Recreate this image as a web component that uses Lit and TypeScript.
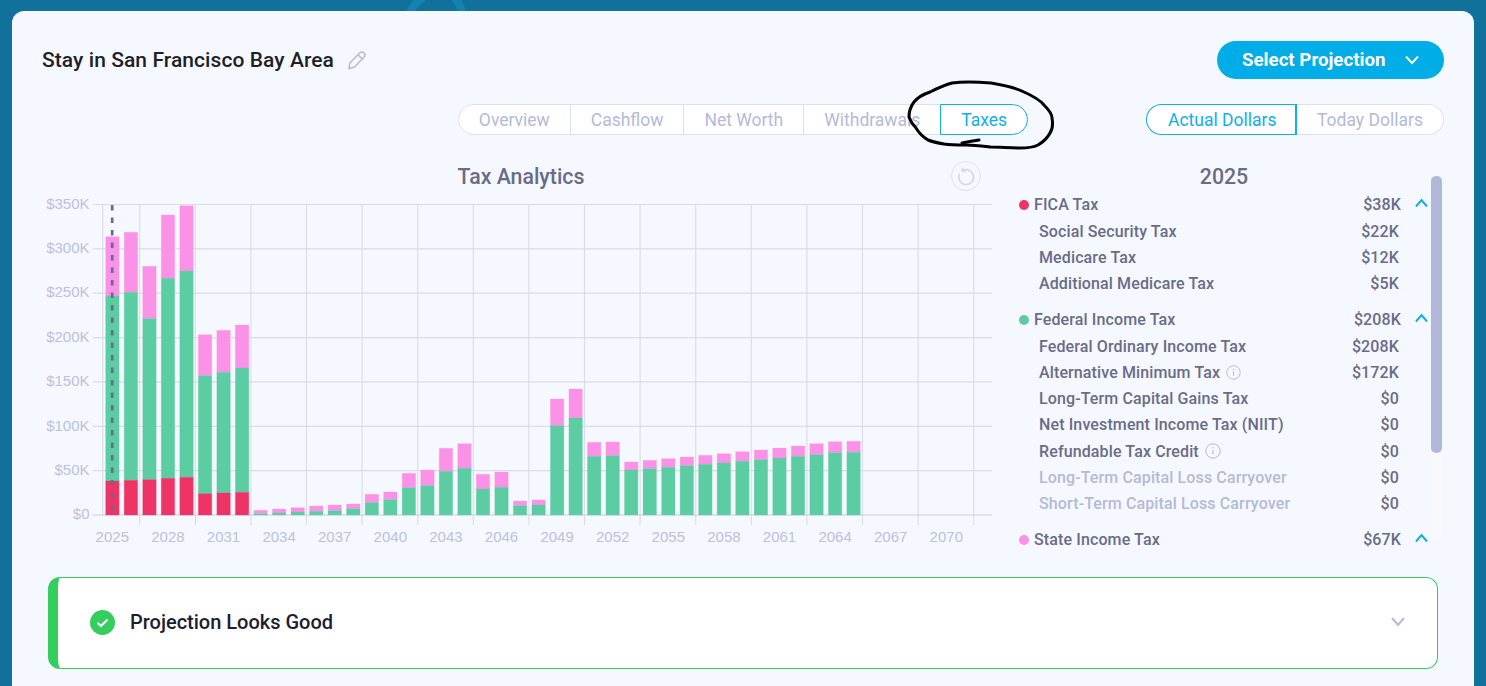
import { LitElement, html, css, svg } from "lit";
import { customElement } from "lit/decorators.js";

const BASE = 515;
// [pink top, green top, red top]
const BARS: number[][] = [
  [236.7, 296, 481], [232.3, 292.3, 480.3], [266.3, 318.7, 479.7], [215, 278.3, 478.3], [205.7, 271, 477.3],
  [334.7, 375.7, 493.7], [330.3, 372.3, 493], [325, 368, 492.3],
  [510.3, 513.7], [509, 513], [507.7, 512], [506, 511.3], [505, 510.7], [504, 508.7],
  [494.3, 502.7], [492, 499.7], [473.3, 487.7], [470, 485.7], [448.3, 471.3], [443.7, 468.3],
  [474.3, 489], [472, 487.3], [501, 505.7], [500, 505], [399, 425.7], [389, 418],
  [442.3, 456.3], [442, 455.7], [462, 470], [460.3, 468.7], [458.7, 467.3], [457, 465.7],
  [455.3, 464.3], [453.7, 463], [451.7, 461.3], [450, 459.7], [448, 458], [446, 456.3],
  [443.7, 454.7], [441.7, 452.7], [441.3, 452.3],
];
const STEP = 18.53;
const Y_LABELS = ["$350K", "$300K", "$250K", "$200K", "$150K", "$100K", "$50K", "$0"];

type Sub = { label: string; value: string; info?: number; dim?: boolean };
type Group = { label: string; value: string; color: string; subs: Sub[] };
const GROUPS: Group[] = [
  {
    label: "FICA Tax", value: "$38K", color: "#ee3466",
    subs: [
      { label: "Social Security Tax", value: "$22K" },
      { label: "Medicare Tax", value: "$12K" },
      { label: "Additional Medicare Tax", value: "$5K" },
    ],
  },
  {
    label: "Federal Income Tax", value: "$208K", color: "#5ccca3",
    subs: [
      { label: "Federal Ordinary Income Tax", value: "$208K" },
      { label: "Alternative Minimum Tax", value: "$172K", info: 15 },
      { label: "Long-Term Capital Gains Tax", value: "$0" },
      { label: "Net Investment Income Tax (NIIT)", value: "$0" },
      { label: "Refundable Tax Credit", value: "$0", info: 16 },
      { label: "Long-Term Capital Loss Carryover", value: "$0", dim: true },
      { label: "Short-Term Capital Loss Carryover", value: "$0", dim: true },
    ],
  },
  { label: "State Income Tax", value: "$67K", color: "#fc92e8", subs: [] },
];

@customElement("app-root")
export class AppRoot extends LitElement {
  static styles = css`
    :host {
      display: block;
      position: relative;
      width: 1486px;
      height: 686px;
      overflow: hidden;
      background: #10729a;
      font-family: Roboto, "Liberation Sans", sans-serif;
      box-sizing: border-box;
      padding: 11px 12px 0;
    }
    * { box-sizing: border-box; }
    .decor { position: absolute; left: 400px; top: 0; width: 70px; height: 11px; }
    .card {
      position: relative;
      background: #f6f8ff;
      border-radius: 12px 12px 0 0;
      height: 675px;
      padding: 30px 30px 0;
    }
    .head { display: flex; justify-content: space-between; align-items: center; height: 38px; }
    .title { display: flex; align-items: center; gap: 13px; font-size: 21px; font-weight: 500; letter-spacing: 0.07px; color: #1f1f27; }
    .select {
      width: 227px; height: 38px; border-radius: 19px; background: #00ade6; color: #fff;
      font-size: 18.7px; font-weight: 700; display: flex; align-items: center; padding: 0 0 1px 25px;
    }
    .select svg { margin-left: 20px; margin-top: 1px; }
    .controls { display: grid; grid-template-columns: 1fr auto 1fr; margin-top: 25px; height: 31px; }
    .tabs { grid-column: 2; display: flex; }
    .tab {
      height: 31px; padding: 0 20px; display: flex; align-items: center; background: #fff;
      font-size: 17.5px; color: #b4bad8; border: 1px solid #dde0f0; border-left: none; white-space: nowrap;
    }
    .tab.first { border-left: 1px solid #dde0f0; border-radius: 16px 0 0 16px; }
    .tab.sel { color: #0fb0e6; border: 1px solid #0fb0e6; border-radius: 0 16px 16px 0; margin-left: -1px; }
    .toggle { grid-column: 3; justify-self: end; display: flex; }
    .tg {
      height: 31px; display: flex; align-items: center; background: #fff; font-size: 17.5px; white-space: nowrap;
    }
    .tg.on {
      width: 151px; padding-left: 21px; color: #0fb0e6; border: 1px solid #0fb0e6; border-right-width: 2px;
      border-radius: 16px 0 0 16px;
    }
    .tg.off {
      width: 147px; padding-left: 20px; color: #b4bad8; border: 1px solid #dde0f0; border-left: none;
      border-radius: 0 16px 16px 0;
    }
    .main { display: flex; margin-top: 26px; height: 400px; }
    .chart { width: 976px; flex: none; }
    .chart-head { display: grid; grid-template-columns: 1fr auto 1fr; width: 958px; height: 30px; align-items: center; }
    .h2 { font-size: 21.3px; font-weight: 500; color: #696c88; grid-column: 2; }
    .reset {
      grid-column: 3; justify-self: end; margin-right: 19px; width: 30px; height: 30px; border-radius: 50%;
      border: 1.5px solid #dde0f0; display: flex; align-items: center; justify-content: center;
    }
    .plot { display: block; }
    .side { display: flex; width: 426px; }
    .listcol { width: 412px; height: 387px; overflow: hidden; }
    .yr { height: 30px; display: flex; align-items: center; justify-content: center; font-size: 21.3px; font-weight: 500; color: #696c88; }
    .group { margin-bottom: 9.6px; }
    .row { display: flex; align-items: center; font-size: 16px; font-weight: 500; letter-spacing: 0.12px; color: #696c88; white-space: nowrap; }
    .row.hd { height: 26px; padding-left: 1px; margin-bottom: 1px; }
    .dot { width: 10px; height: 10px; border-radius: 50%; margin-right: 5px; margin-top: 2px; flex: none; }
    .val { margin-left: auto; }
    .chev { width: 29px; flex: none; display: flex; justify-content: flex-end; padding: 0 2px 3px 0; }
    .row.sub { height: 26.2px; padding: 0 31px 0 21px; }
    .row.sub.dim .lb { color: #b4bad8; }
    .info { margin-left: 6px; flex: none; }
    .track { width: 11px; margin: 15px 0 0 1px; height: 361px; background: #f9f9fc; border-radius: 5px; }
    .thumb { height: 277px; background: #b1b7d8; border-radius: 5px; }
    .status {
      margin: 16px 6px 0; height: 92px; background: #fff; border: 1px solid #34ce5f; border-left-width: 10px;
      border-radius: 12px; display: flex; align-items: center; padding: 0 32px 2px 32px;
    }
    .status .t { font-size: 20px; font-weight: 500; color: #1c1e2e; margin-left: 15px; }
    .status .end { margin-left: auto; display: flex; }
    .ink { position: absolute; left: 900px; top: 75px; width: 165px; height: 85px; pointer-events: none; }
    text { font-family: "Liberation Sans", Arial, sans-serif; font-size: 15px; fill: #bcc1de; }
  `;

  private plot() {
    const vlines = [102.7];
    for (let i = 0; i < 16; i++) vlines.push(139.7 + i * 55.6);
    const grid = Y_LABELS.map((_, i) => 204.5 + i * 44.36);
    return html`<svg class="plot" width="958" height="370" viewBox="42 191 958 370">
      ${vlines.map((x, i) => svg`<line x1=${x} x2=${x} y1="204.5" y2=${i === 0 ? 515 : 525} stroke="#dcdee8" stroke-width="1.2"></line>`)}
      ${grid.map((y, i) => svg`<line x1="92.7" x2="992" y1=${y} y2=${y} stroke=${i === 7 ? "#cbcedd" : "#dadce6"} stroke-width="1.2"></line>
        <text x="89.5" y=${y + 4.2} text-anchor="end">${Y_LABELS[i]}</text>`)}
      ${BARS.map((b, i) => {
        const x = 105.7 + i * STEP;
        const bot = [b[1], b[2] ?? BASE, BASE];
        const cols = ["#fc92e8", "#5ccca3", "#ee3466"];
        return b.map((top, k) => svg`<rect x=${x} y=${top} width="13.4" height=${bot[k] - top}
          fill=${cols[k]} stroke=${cols[k]} stroke-opacity="0.3" stroke-width="1"></rect>`);
      })}
      <line x1="112.2" x2="112.2" y1="205" y2="514" stroke="#696c88" stroke-width="2.7" stroke-dasharray="5.5 7"></line>
      ${Array.from({ length: 16 }, (_, i) => svg`<text x=${112.3 + i * 55.6} y="542" text-anchor="middle">${2025 + i * 3}</text>`)}
    </svg>`;
  }

  private infoIcon(size: number) {
    return html`<svg class="info" width=${size} height=${size} viewBox="0 0 16 16" fill="none">
      <circle cx="8" cy="8" r="7.2" stroke="#b4bad8" stroke-width="1"></circle>
      <line x1="8" y1="7" x2="8" y2="11.5" stroke="#b4bad8" stroke-width="1.1"></line>
      <circle cx="8" cy="4.8" r="0.7" fill="#b4bad8"></circle>
    </svg>`;
  }

  render() {
    const tabs = ["Overview", "Cashflow", "Net Worth", "Withdrawals"];
    return html`
      <svg class="decor" viewBox="0 0 70 11" fill="none">
        <path d="M10 13 Q13 4 24 -3 M54 -3 Q60 3 62 13" stroke="#1483b2" stroke-width="8"></path>
      </svg>
      <div class="card">
        <div class="head">
          <div class="title">
            <span>Stay in San Francisco Bay Area</span>
            <svg width="20" height="20" viewBox="0 0 20 20" fill="none" stroke="#b4bad8" stroke-width="1.5" stroke-linejoin="round">
              <path d="M13 2.8 a3 3 0 0 1 4.4 4 L7.5 17 L2 18.8 L2.8 13 Z"></path>
              <path d="M11 5 L15.5 8.8"></path>
            </svg>
          </div>
          <div class="select">
            <span>Select Projection</span>
            <svg width="14" height="10" viewBox="0 0 14 10" fill="none" stroke="#fff" stroke-width="2"><path d="M1 1.5 L7 8 L13 1.5"></path></svg>
          </div>
        </div>
        <div class="controls">
          <div class="tabs">
            ${tabs.map((t, i) => html`<div class="tab ${i === 0 ? "first" : ""}">${t}</div>`)}
            <div class="tab sel">Taxes</div>
          </div>
          <div class="toggle">
            <div class="tg on">Actual Dollars</div>
            <div class="tg off">Today Dollars</div>
          </div>
        </div>
        <div class="main">
          <div class="chart">
            <div class="chart-head">
              <div class="h2">Tax Analytics</div>
              <div class="reset">
                <svg width="20" height="20" viewBox="0 0 20 20" fill="none" stroke="#d3d6ea" stroke-width="1.6">
                  <path d="M6.2 4.8 A7.4 7.4 0 1 1 3.4 8"></path>
                  <path d="M6.6 1.6 L6.2 5 L9.6 5.6"></path>
                </svg>
              </div>
            </div>
            ${this.plot()}
          </div>
          <div class="side">
            <div class="listcol">
              <div class="yr">2025</div>
              ${GROUPS.map((g) => html`<div class="group">
                <div class="row hd">
                  <span class="dot" style="background:${g.color}"></span>
                  <span>${g.label}</span>
                  <span class="val">${g.value}</span>
                  <span class="chev">
                    <svg width="13" height="10" viewBox="0 0 13 10" fill="none" stroke="#0fb0e6" stroke-width="2"><path d="M1 8.5 L6.5 2 L12 8.5"></path></svg>
                  </span>
                </div>
                ${g.subs.map((s) => html`<div class="row sub ${s.dim ? "dim" : ""}">
                  <span class="lb">${s.label}</span>
                  ${s.info ? this.infoIcon(s.info) : ""}
                  <span class="val">${s.value}</span>
                </div>`)}
              </div>`)}
            </div>
            <div class="track"><div class="thumb"></div></div>
          </div>
        </div>
        <div class="status">
          <svg width="25" height="25" viewBox="0 0 25 25" fill="none">
            <circle cx="12.5" cy="12.5" r="12.5" fill="#34ce5f"></circle>
            <path d="M7.5 12.8 L11 16 L17.5 9.5" stroke="#fff" stroke-width="2.2"></path>
          </svg>
          <span class="t">Projection Looks Good</span>
          <span class="end">
            <svg width="14" height="10" viewBox="0 0 14 10" fill="none" stroke="#b4bad8" stroke-width="2"><path d="M1 1 L7 8 L13 1"></path></svg>
          </span>
        </div>
      </div>
      <svg class="ink" viewBox="900 75 165 85" fill="none" stroke="#000" stroke-width="3" stroke-linecap="round" stroke-linejoin="round">
        <path d="M952 83 C965 81 980 82 991 83 C1003 85 1014 87 1024 92 C1033 96 1040 100 1044 105 C1049 110 1052 114 1052 118 C1053 124 1053 129 1050 133 C1047 139 1043 142 1038 145 C1032 148 1026 148 1020 148 C1010 148 1000 147 991 147 C982 146 974 145 966 145 C958 145 951 145 944 144 C938 143 933 142 928 140 C923 137 919 133 916 128 C912 124 910 120 909 117 C909 111 911 106 914 102 C918 97 924 94 930 92 C938 88 945 85 952 83 Z"></path>
        <path d="M979 140 C972 141 967 142 962 143"></path>
      </svg>
    `;
  }
}
